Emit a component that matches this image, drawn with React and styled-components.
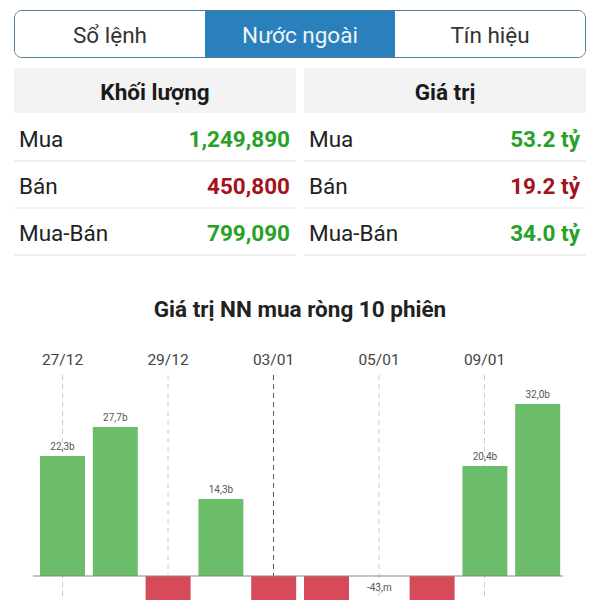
import React from "react";
import styled, { createGlobalStyle } from "styled-components";

const GlobalStyle = createGlobalStyle`
  body {
    margin: 0;
    background: #fff;
    font-family: Roboto, "Liberation Sans", sans-serif;
  }
`;

const Page = styled.div`
  width: 600px;
  height: 600px;
  overflow: hidden;
  padding: 10px 14px 0;
  box-sizing: border-box;
`;

const Tabs = styled.div`
  display: flex;
  height: 48px;
  border: 1.5px solid #557a96;
  border-radius: 8px;
  overflow: hidden;
  box-sizing: border-box;
`;

const Tab = styled.div`
  flex: 1;
  display: flex;
  align-items: center;
  justify-content: center;
  padding-top: 2px;
  font-size: 22.5px;
  color: ${(p) => (p.active ? "#eef4fa" : "#333")};
  background: ${(p) => (p.active ? "#2a7fbd" : "#fff")};
`;

const Columns = styled.div`
  display: grid;
  grid-template-columns: 1fr 1fr;
  gap: 8px;
  margin-top: 10px;
`;

const Column = styled.div`
  display: flex;
  flex-direction: column;
`;

const Header = styled.div`
  height: 45px;
  margin-bottom: 2px;
  background: #f3f3f3;
  display: flex;
  align-items: center;
  justify-content: center;
  padding-top: 2px;
  box-sizing: border-box;
  font-size: 22.5px;
  font-weight: 700;
  color: #1a1a1a;
`;

const Row = styled.div`
  height: 47px;
  box-sizing: border-box;
  border-bottom: 2px solid #f0f0f0;
  display: flex;
  align-items: center;
  justify-content: space-between;
  padding: 3px 6px 0 5px;
  font-size: 22.5px;
`;

const Label = styled.span`
  color: #222;
`;

const Value = styled.span`
  font-weight: 700;
  color: ${(p) => (p.red ? "#a5121c" : "#27a127")};
`;

const ChartTitle = styled.div`
  margin-top: 40px;
  text-align: center;
  font-size: 22.5px;
  font-weight: 700;
  color: #222;
`;

const ChartBox = styled.div`
  margin: 9px -14px 0;
`;

const volume = [
  { label: "Mua", value: "1,249,890" },
  { label: "Bán", value: "450,800", red: true },
  { label: "Mua-Bán", value: "799,090" },
];

const amount = [
  { label: "Mua", value: "53.2 tỷ" },
  { label: "Bán", value: "19.2 tỷ", red: true },
  { label: "Mua-Bán", value: "34.0 tỷ" },
];

// top of bar in page coords, baseline at 575
const bars = [
  { top: 455, text: "22,3b" },
  { top: 426, text: "27,7b" },
  { top: 640 },
  { top: 498, text: "14,3b" },
  { top: 640 },
  { top: 640 },
  { top: 576, text: "-43,m", neg: true },
  { top: 640 },
  { top: 465, text: "20,4b" },
  { top: 403, text: "32,0b" },
];

const dates = ["27/12", "29/12", "03/01", "05/01", "09/01"];

function Chart() {
  const y0 = 330;
  const base = 575 - y0;
  return (
    <svg width="600" height="270" viewBox="0 0 600 270">
      {dates.map((d, i) => {
        const x = 62.5 + i * 105.5;
        return (
          <g key={d}>
            <text x={x} y={358 - y0 + 6} textAnchor="middle" fontSize="15.5" fill="#444" fontFamily="Roboto, sans-serif">
              {d}
            </text>
            <line
              x1={x}
              x2={x}
              y1={374 - y0}
              y2={270}
              stroke={i === 2 ? "#555" : "#ccc"}
              strokeWidth="1"
              strokeDasharray="5 4"
            />
          </g>
        );
      })}
      {bars.map((b, i) => {
        const x = 40 + i * 52.8;
        const green = b.top < 575;
        const top = b.top - y0;
        return (
          <g key={i}>
            {green ? (
              <rect x={x} y={top} width="45" height={base - top} fill="#6cbd6a" />
            ) : b.neg ? null : (
              <rect x={x} y={base} width="45" height={top - base} fill="#d74a5a" />
            )}
            {b.text && (
              <text
                x={x + 22.5}
                y={b.neg ? base + 15 : top - 6}
                textAnchor="middle"
                fontSize="10"
                fill="#555"
                fontFamily="Roboto, sans-serif"
              >
                {b.text}
              </text>
            )}
          </g>
        );
      })}
      <line x1="33" x2="563" y1={base} y2={base} stroke="#888" strokeWidth="1.2" />
    </svg>
  );
}

export default function App() {
  return (
    <>
      <GlobalStyle />
      <Page>
        <Tabs>
          <Tab>Sổ lệnh</Tab>
          <Tab active>Nước ngoài</Tab>
          <Tab>Tín hiệu</Tab>
        </Tabs>
        <Columns>
          <Column>
            <Header>Khối lượng</Header>
            {volume.map((r) => (
              <Row key={r.label}>
                <Label>{r.label}</Label>
                <Value red={r.red}>{r.value}</Value>
              </Row>
            ))}
          </Column>
          <Column>
            <Header>Giá trị</Header>
            {amount.map((r) => (
              <Row key={r.label}>
                <Label>{r.label}</Label>
                <Value red={r.red}>{r.value}</Value>
              </Row>
            ))}
          </Column>
        </Columns>
        <ChartTitle>Giá trị NN mua ròng 10 phiên</ChartTitle>
        <ChartBox>
          <Chart />
        </ChartBox>
      </Page>
    </>
  );
}
